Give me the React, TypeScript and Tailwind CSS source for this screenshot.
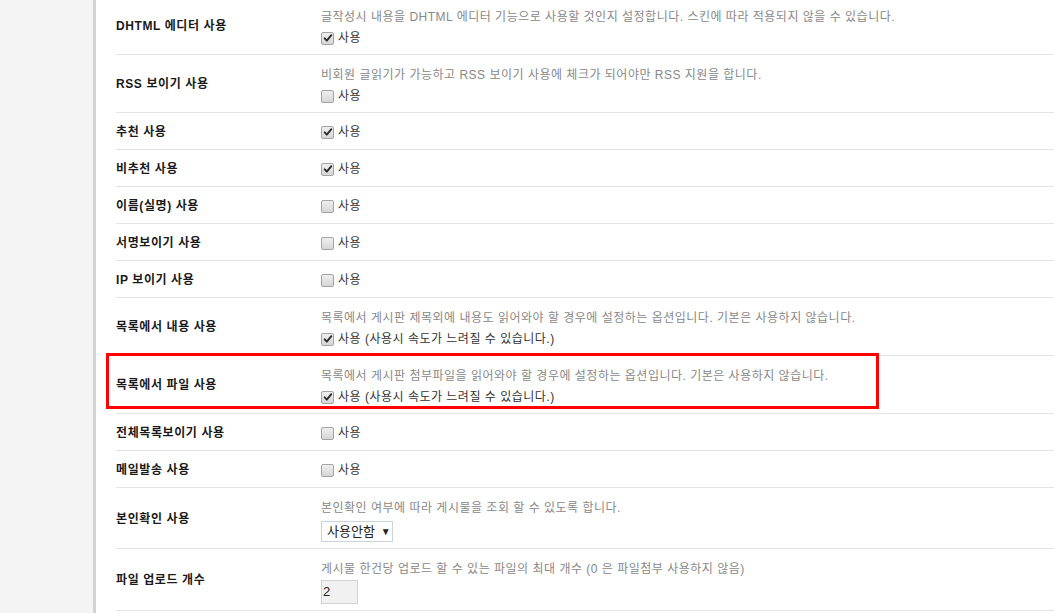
import React from 'react';

const font = { fontFamily: '"Liberation Sans", "Noto Sans CJK KR", sans-serif' };

const CheckBox = ({ checked }: { checked?: boolean }) => (
  <span className="inline-flex h-[13px] w-[13px] shrink-0 items-center justify-center rounded-[2px] border border-[#a3a3a3] bg-gradient-to-b from-[#efefef] to-[#d6d6d6]">
    {checked && (
      <svg viewBox="0 0 12 12" className="h-[10px] w-[10px]">
        <path d="M2 6.4 L4.6 9.2 L10 2.6" fill="none" stroke="#2e2e2e" strokeWidth="2.3" strokeLinecap="round" strokeLinejoin="round" />
      </svg>
    )}
  </span>
);

const CheckLine = ({ checked, note }: { checked?: boolean; note?: string }) => (
  <div className="flex h-5 items-center gap-[4px] text-[12px] tracking-[0.5px] text-[#333]">
    <CheckBox checked={checked} />
    <span>사용{note ? ` ${note}` : ''}</span>
  </div>
);

interface RowProps {
  label: string;
  desc?: string;
  children: React.ReactNode;
  highlight?: boolean;
}

const Row = ({ label, desc, children, highlight }: RowProps) => (
  <div className="relative grid grid-cols-[200px_1fr] border-b border-[#e3e3e3]">
    <div className="flex items-center pt-px text-[12px] font-bold tracking-[0.6px] text-[#1a1a1a]">{label}</div>
    <div className={desc ? 'pb-[6px] pl-[5px] pt-[10px]' : 'pb-[7px] pl-[5px] pt-[9px]'}>
      {desc && <div className="mb-px h-5 leading-5 text-[12px] tracking-[0.5px] text-[#888]">{desc}</div>}
      {children}
    </div>
    {/* annotation box */}
    {highlight && (
      <div className="pointer-events-none absolute left-[-10px] top-[-3px] h-[56px] w-[773px] border-[3px] border-[#ff0000]" />
    )}
  </div>
);

export default function App() {
  return (
    <div className="flex h-[613px] w-full overflow-hidden bg-white" style={font}>
      <div className="w-[93px] shrink-0 bg-[#f4f4f4]" />
      <div className="w-[3px] shrink-0 bg-[#d3d3d3]" />
      <div className="min-w-0 flex-1 pl-5">
        <div className="-mt-[3px]">
          <Row label="DHTML 에디터 사용" desc="글작성시 내용을 DHTML 에디터 기능으로 사용할 것인지 설정합니다. 스킨에 따라 적용되지 않을 수 있습니다.">
            <CheckLine checked />
          </Row>
          <Row label="RSS 보이기 사용" desc="비회원 글읽기가 가능하고 RSS 보이기 사용에 체크가 되어야만 RSS 지원을 합니다.">
            <CheckLine />
          </Row>
          <Row label="추천 사용">
            <CheckLine checked />
          </Row>
          <Row label="비추천 사용">
            <CheckLine checked />
          </Row>
          <Row label="이름(실명) 사용">
            <CheckLine />
          </Row>
          <Row label="서명보이기 사용">
            <CheckLine />
          </Row>
          <Row label="IP 보이기 사용">
            <CheckLine />
          </Row>
          <Row label="목록에서 내용 사용" desc="목록에서 게시판 제목외에 내용도 읽어와야 할 경우에 설정하는 옵션입니다. 기본은 사용하지 않습니다.">
            <CheckLine checked note="(사용시 속도가 느려질 수 있습니다.)" />
          </Row>
          <Row highlight label="목록에서 파일 사용" desc="목록에서 게시판 첨부파일을 읽어와야 할 경우에 설정하는 옵션입니다. 기본은 사용하지 않습니다.">
            <CheckLine checked note="(사용시 속도가 느려질 수 있습니다.)" />
          </Row>
          <Row label="전체목록보이기 사용">
            <CheckLine />
          </Row>
          <Row label="메일발송 사용">
            <CheckLine />
          </Row>
          <Row label="본인확인 사용" desc="본인확인 여부에 따라 게시물을 조회 할 수 있도록 합니다.">
            <div className="mt-[3px] flex h-[21px] w-[72px] items-center gap-[6px] border border-[#c9d5dc] bg-white pl-[5px] text-[13px] text-[#222]">
              <span>사용안함</span>
              <span className="text-[10px]">▼</span>
            </div>
          </Row>
          <Row label="파일 업로드 개수" desc="게시물 한건당 업로드 할 수 있는 파일의 최대 개수 (0 은 파일첨부 사용하지 않음)">
            <div className="flex h-[24px] w-[37px] items-center border border-[#d2d2d2] bg-[#f1f1f1] pl-[1px] text-[13px] text-[#222]">
              2
            </div>
          </Row>
        </div>
      </div>
    </div>
  );
}
